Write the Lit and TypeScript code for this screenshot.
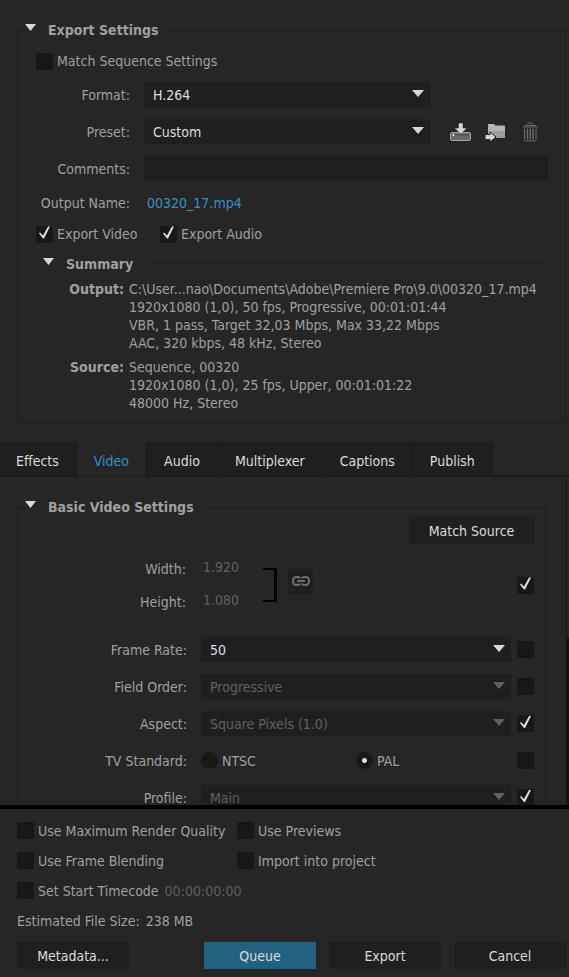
import { LitElement, html, css, svg, nothing } from "lit";
import { customElement } from "lit/decorators.js";
import { classMap } from "lit/directives/class-map.js";

const driveIcon = svg`
  <svg width="22" height="20" viewBox="0 0 22 20" aria-hidden="true">
    <rect x=".5" y="10.500" width="20" height="8" rx="1.500" fill="#6a6a6a" stroke="#a4a4a4"/>
    <rect x="2" y="12" width="17" height="2" fill="#585858"/>
    <circle cx="3.500" cy="13" r="1" fill="#fff"/>
    <path d="M8.500 1h4.500v5h4L10.800 12.300 4.500 6h4z" fill="#d6d6d6" stroke="#262626" stroke-width=".6"/>
  </svg>`;

const folderIcon = svg`
  <svg width="22" height="20" viewBox="0 0 22 20" aria-hidden="true">
    <path d="M3 3Q3 2 4 2H9l1.500 1.500H19q1 0 1 1V15q0 1-1 1H3z" fill="#b4b4b4"/>
    <path d="M3 9h17v6q0 1-1 1H3z" fill="#9c9c9c"/>
    <path d="M0 12.500h5V10l6 5-6 5v-2.500H0z" fill="#d6d6d6" stroke="#262626" stroke-width="1"/>
  </svg>`;

const trashIcon = svg`
  <svg width="22" height="20" viewBox="0 0 22 20" aria-hidden="true" fill="none" stroke="#6c6c6c">
    <path d="M7.500 2.500q0-1.500 1-1.500h3q1 0 1 1.500"/>
    <path d="M4.500 3.500h11.500"/>
    <path d="M3 5h14.500"/>
    <path d="M4.500 6.500v11q0 1.500 1.500 1.500h8.500q1.500 0 1.500-1.500v-11"/>
    <path d="M7.500 6.500v11M10.250 6.500v11M13 6.500v11" stroke-width="1.400"/>
  </svg>`;

const linkIcon = svg`
  <svg width="18" height="10" viewBox="0 0 18 10" aria-hidden="true" fill="none" stroke="#6c6c6c" stroke-width="2">
    <path d="M8 2.500Q7.500 1 6 1H4.500Q1 1 1 5t3.500 4H6q1.500 0 2-1.500M10 2.500Q10.500 1 12 1h1.500Q17 1 17 5t-3.500 4H12q-1.500 0-2-1.500"/>
    <path d="M5 5h8"/>
  </svg>`;

interface SelectRow {
  id: string;
  label: string;
  value: string;
  disabled: boolean;
  matched: boolean;
}

const leadRows: SelectRow[] = [
  { id: "rate", label: "Frame Rate:", value: "50", disabled: false, matched: false },
  { id: "order", label: "Field Order:", value: "Progressive", disabled: true, matched: false },
  { id: "aspect", label: "Aspect:", value: "Square Pixels (1.0)", disabled: true, matched: true },
];
const profileRow: SelectRow = { id: "profile", label: "Profile:", value: "Main", disabled: true, matched: true };

const tabs = ["Effects", "Video", "Audio", "Multiplexer", "Captions", "Publish"];

@customElement("app-root")
export class AppRoot extends LitElement {
  static styles = css`
    :host {
      display: flex;
      flex-direction: column;
      height: 100vh;
      overflow: hidden;
      background: #262626;
      color: #a0a0a0;
      font: 14px/18px "DejaVu Sans Condensed", "Noto Sans", sans-serif;
    }
    *, *::before, *::after { box-sizing: border-box; }
    button, input, select { font: inherit; color: inherit; margin: 0; border: 0; border-radius: 0; }
    button { padding: 0; background: none; }

    fieldset { min-width: 0; margin: 0; padding: 0; border: 1px solid #1c1c1c; }
    legend { padding: 0; }
    .export { margin: 20px 3px 19px 17px; padding: 0 17px 10px 18px; }
    .basic { margin: 20px 20px 0 17px; padding: 0 11px 0 18px; }
    .heading { margin-left: -11px; padding-right: 8px; }
    .toggle {
      display: flex;
      align-items: center;
      gap: 12px;
      height: 20px;
      font-weight: bold;
      white-space: nowrap;
    }
    .toggle::before {
      content: "";
      width: 11px;
      height: 7px;
      margin-bottom: 5px;
      background: #d8d8d8;
      clip-path: polygon(0 0, 100% 0, 50% 100%);
    }

    .tick {
      appearance: none;
      flex: none;
      width: 17px;
      height: 17px;
      background: #181818;
    }
    .tick:checked::before {
      content: "";
      display: block;
      width: 17px;
      height: 17px;
      background: #dedede;
      clip-path: polygon(3px 8px, 4px 7px, 7px 10px, 12px 1px, 14px 1px, 8px 13px, 7px 13px);
    }
    .check { display: flex; align-items: center; gap: 4px; white-space: nowrap; }

    .match { margin-top: 12px; }
    .form {
      display: grid;
      grid-template-columns: 94px minmax(0, 1fr);
      grid-template-rows: 25px 25px 25px 20px;
      gap: 12px 14px;
      align-items: center;
      margin-top: 12px;
    }
    .label { text-align: right; white-space: nowrap; }
    .with-tools { display: grid; grid-template-columns: minmax(0, 1fr) 118px; align-items: center; }
    .tools { display: flex; gap: 13px; padding-left: 20px; }
    .tools button, .tools svg { display: block; }
    .drop { position: relative; }
    .drop select {
      display: block;
      appearance: none;
      width: 100%;
      height: 25px;
      padding: 0 24px 0 9px;
      background: #1f1f1f;
      color: #dcdcdc;
    }
    .drop::after {
      content: "";
      position: absolute;
      top: 8px;
      right: 6px;
      width: 12px;
      height: 7px;
      background: #d8d8d8;
      clip-path: polygon(0 0, 100% 0, 50% 100%);
      pointer-events: none;
    }
    .drop.off select { color: #606060; opacity: 1; }
    .drop.off::after { background: #606060; }
    .comments { width: 100%; height: 25px; padding: 0 9px; background: #1f1f1f; }
    .name { margin-left: 3px; color: #2f93cc; text-decoration: none; }

    .exports { display: grid; grid-template-columns: 124px auto; margin-top: 12px; }
    .summary-head { display: flex; align-items: center; gap: 16px; margin: 11px 0 6px 7px; }
    .rule { flex: 1; height: 1px; margin-bottom: 4px; background: #1c1c1c; }
    .summary {
      display: grid;
      grid-template-columns: 88px minmax(0, 1fr);
      gap: 6px 5px;
      margin: 0;
      white-space: nowrap;
    }
    .summary dt { text-align: right; font-weight: bold; }
    .summary dd { margin: 0; }

    .tabs { display: flex; flex: none; height: 35px; border-bottom: 2px solid #1c1c1c; }
    .tab {
      padding: 4px 17px 0;
      border-right: 1px solid #1a1a1a;
      background: #1f1f1f;
      color: #dcdcdc;
    }
    .tab:first-child { padding-left: 16px; }
    .tab.on { margin-bottom: -1px; background: #262626; color: #2f93cc; }

    .pane {
      display: grid;
      grid-template-columns: minmax(0, 1fr) 3px;
      flex: 1;
      min-height: 0;
      overflow: hidden;
      border-bottom: 4px solid #000;
    }
    .view { overflow: hidden; min-height: 0; }
    .track { background: #141414; }
    .thumb { height: 49%; border-left: 1px solid #161616; background: #292929; }
    .source { display: flex; justify-content: flex-end; }
    .btn { height: 27px; background: #1f1f1f; color: #dcdcdc; }
    .source .btn { width: 125px; }
    .size {
      display: grid;
      grid-template-columns: 150px 77px 25px 1fr 17px;
      align-items: center;
      margin: 8px 0 19px;
    }
    .size-labels, .size-values { display: grid; grid-auto-rows: 33px; align-items: center; }
    .size-values input { width: 77px; padding: 0 0 4px 17px; background: none; color: #606060; }
    .bracket { width: 14px; height: 34px; border: 2px solid #000; border-right-width: 3px; border-left: 0; }
    .link {
      display: grid;
      place-items: center;
      width: 25px;
      height: 25px;
      margin-bottom: 8px;
      background: #1f1f1f;
    }
    .rows { display: grid; gap: 12px; }
    .row {
      display: grid;
      grid-template-columns: 151px minmax(0, 1fr) 17px;
      align-items: center;
      height: 25px;
    }
    .row .drop { margin: 0 6px 0 14px; }
    .radios { display: grid; grid-template-columns: 1fr 1fr; margin: 0 6px 0 14px; }
    .radio { appearance: none; flex: none; width: 17px; height: 17px; border-radius: 50%; background: #181818; }
    .radio:checked { background: radial-gradient(circle, #dedede 2px, #181818 3px); }

    .footer { flex: none; padding: 13px 3px 8px 17px; }
    .options { display: grid; grid-template-columns: 220px 1fr; grid-auto-rows: 17px; gap: 13px 0; }
    .timecode { width: 90px; padding: 0; background: none; color: #606060; }
    .options .start { gap: 6px; }
    .estimate { display: flex; gap: 6px; margin: 13px 0 12px; }
    .actions { display: flex; gap: 13px; }
    .actions .btn { flex: 0 1 112px; }
    .actions .first { margin-right: auto; }
    .actions .primary { background: #216283; }
  `;

  private drop(id: string, value: string, disabled = false) {
    return html`<div class=${classMap({ drop: true, off: disabled })}>
      <select id=${id} ?disabled=${disabled}><option>${value}</option></select>
    </div>`;
  }

  private check(text: string, checked = false) {
    return html`<label class="check"><input class="tick" type="checkbox" ?checked=${checked}>${text}</label>`;
  }

  private row(r: SelectRow) {
    return html`<div class="row">
      <label class="label" for=${r.id}>${r.label}</label>
      ${this.drop(r.id, r.value, r.disabled)}
      <input class="tick" type="checkbox" aria-label="Match source" ?checked=${r.matched}>
    </div>`;
  }

  render() {
    return html`
      <fieldset class="export">
        <legend class="heading"><button class="toggle">Export Settings</button></legend>
        <div class="match">${this.check("Match Sequence Settings")}</div>
        <div class="form">
          <label class="label" for="format">Format:</label>
          <div class="with-tools">${this.drop("format", "H.264")}</div>
          <label class="label" for="preset">Preset:</label>
          <div class="with-tools">
            ${this.drop("preset", "Custom")}
            <div class="tools">
              <button aria-label="Save preset">${driveIcon}</button>
              <button aria-label="Import preset">${folderIcon}</button>
              <button aria-label="Delete preset">${trashIcon}</button>
            </div>
          </div>
          <label class="label" for="comments">Comments:</label>
          <input class="comments" id="comments" type="text">
          <span class="label">Output Name:</span>
          <a class="name" href="#">00320_17.mp4</a>
        </div>
        <div class="exports">${this.check("Export Video", true)}${this.check("Export Audio", true)}</div>
        <div class="summary-head"><button class="toggle">Summary</button><span class="rule"></span></div>
        <dl class="summary">
          <dt>Output:</dt>
          <dd>
            C:\\User...nao\\Documents\\Adobe\\Premiere Pro\\9.0\\00320_17.mp4<br>
            1920x1080 (1,0), 50 fps, Progressive, 00:01:01:44<br>
            VBR, 1 pass, Target 32,03 Mbps, Max 33,22 Mbps<br>
            AAC, 320 kbps, 48 kHz, Stereo
          </dd>
          <dt>Source:</dt>
          <dd>
            Sequence, 00320<br>
            1920x1080 (1,0), 25 fps, Upper, 00:01:01:22<br>
            48000 Hz, Stereo
          </dd>
        </dl>
      </fieldset>

      <div class="tabs" role="tablist">
        ${tabs.map((t) => html`<button class=${classMap({ tab: true, on: t === "Video" })} role="tab"
          aria-selected=${t === "Video" ? "true" : nothing}>${t}</button>`)}
      </div>

      <div class="pane">
        <div class="view">
          <fieldset class="basic">
            <legend class="heading"><button class="toggle">Basic Video Settings</button></legend>
            <div class="source"><button class="btn">Match Source</button></div>
            <div class="size">
              <div class="size-labels">
                <label class="label" for="width">Width:</label>
                <label class="label" for="height">Height:</label>
              </div>
              <div class="size-values">
                <input id="width" type="text" value="1.920" disabled>
                <input id="height" type="text" value="1.080" disabled>
              </div>
              <span class="bracket"></span>
              <button class="link" aria-label="Constrain proportions">${linkIcon}</button>
              <input class="tick" type="checkbox" aria-label="Match source" checked>
            </div>
            <div class="rows">
              ${leadRows.map((r) => this.row(r))}
              <div class="row">
                <span class="label">TV Standard:</span>
                <div class="radios">
                  <label class="check"><input class="radio" type="radio" name="tv">NTSC</label>
                  <label class="check"><input class="radio" type="radio" name="tv" checked>PAL</label>
                </div>
                <input class="tick" type="checkbox" aria-label="Match source">
              </div>
              ${this.row(profileRow)}
            </div>
          </fieldset>
        </div>
        <div class="track"><div class="thumb"></div></div>
      </div>

      <div class="footer">
        <div class="options">
          ${this.check("Use Maximum Render Quality")}${this.check("Use Previews")}
          ${this.check("Use Frame Blending")}${this.check("Import into project")}
          <div class="check start">
            ${this.check("Set Start Timecode")}
            <input class="timecode" type="text" aria-label="Start timecode" value="00:00:00:00" disabled>
          </div>
        </div>
        <div class="estimate"><span>Estimated File Size:</span><span>238 MB</span></div>
        <div class="actions">
          <button class="btn first">Metadata...</button>
          <button class="btn primary">Queue</button>
          <button class="btn">Export</button>
          <button class="btn">Cancel</button>
        </div>
      </div>
    `;
  }
}
